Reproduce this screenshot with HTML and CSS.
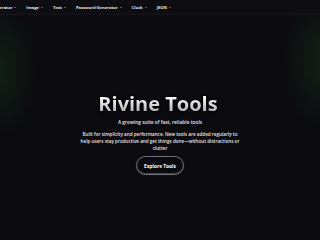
FILE: index.html
```html
<!DOCTYPE html>
<html lang="en">
<head>
<meta charset="utf-8">
<title>Rivine Tools</title>
<link rel="stylesheet" href="styles.css">
</head>
<body>
<nav class="nav">
  <ul class="nav-list">
    <li class="nav-item">QR Code Generator <span class="caret"></span></li>
    <li class="nav-item">Image <span class="caret"></span></li>
    <li class="nav-item">Text <span class="caret"></span></li>
    <li class="nav-item">Password Generator <span class="caret"></span></li>
    <li class="nav-item">Clock <span class="caret"></span></li>
    <li class="nav-item">JSON <span class="caret"></span></li>
  </ul>
</nav>
<main class="hero">
  <h1 class="title">Rivine Tools</h1>
  <p class="tagline">A growing suite of fast, reliable tools</p>
  <p class="lead">Built for simplicity and performance. New tools are added regularly to help users stay productive and get things done—without distractions or clutter</p>
  <a class="cta" href="#">Explore Tools</a>
</main>
</body>
</html>
```
FILE: styles.css
```css
html, body {
  margin: 0;
  padding: 0;
  height: 100%;
}
body {
  background-color: #0b0a0f;
  background-image:
    radial-gradient(ellipse 40px 70px at 0px 70px, rgba(30, 70, 30, 0.35), rgba(30,70,30,0) 100%),
    radial-gradient(ellipse 40px 70px at 320px 60px, rgba(30, 70, 30, 0.35), rgba(30,70,30,0) 100%);
  color: #fff;
  font-family: "Open Sans", "Liberation Sans", sans-serif;
  overflow: hidden;
}
.nav {
  height: 14px;
  background: #0e0d12;
  border-bottom: 1px solid #16151b;
  overflow: hidden;
  display: flex;
  align-items: center;
}
.nav-list {
  list-style: none;
  margin: 0 0 0 -27px;
  padding: 0;
  display: flex;
  gap: 10px;
  white-space: nowrap;
}
.nav-item {
  display: flex;
  align-items: center;
  gap: 2px;
  font-size: 4.2px;
  font-weight: 700;
  color: #e6e6e6;
  letter-spacing: -0.05px;
}
.caret {
  width: 0;
  height: 0;
  border-left: 1.3px solid transparent;
  border-right: 1.3px solid transparent;
  border-top: 1.5px solid #a8a8ad;
}
.hero {
  display: flex;
  flex-direction: column;
  align-items: center;
  padding-top: 78px;
  text-align: center;
}
.title {
  margin: 0 0 0 -4px;
  font-size: 20px;
  font-weight: 700;
  line-height: 22px;
  background: linear-gradient(180deg, #ffffff 15%, #d4d4d8 55%, #a0a0a6 100%);
  -webkit-background-clip: text;
  background-clip: text;
  color: transparent;
  filter: drop-shadow(0 0 1px rgba(0,0,0,0.9)) drop-shadow(0 1px 1px #000);
}
.tagline {
  margin: 4px 0 0;
  font-size: 4.8px;
  font-weight: 600;
  line-height: 7px;
  color: #e8e8e8;
}
.lead {
  margin: 5px 0 0;
  max-width: 164px;
  font-size: 4.6px;
  font-weight: 600;
  line-height: 7px;
  color: #e8e8e8;
}
.cta {
  margin-top: 4px;
  width: 46px;
  height: 17px;
  display: flex;
  align-items: center;
  justify-content: center;
  border: 1px solid #6e6e74;
  border-radius: 999px;
  background: #0b0a0f;
  box-shadow: inset 0 -1px 0 rgba(255,255,255,0.25), 0 0 3px rgba(255,255,255,0.08);
  color: #fff;
  text-decoration: none;
  font-size: 4.8px;
  font-weight: 700;
}
```
